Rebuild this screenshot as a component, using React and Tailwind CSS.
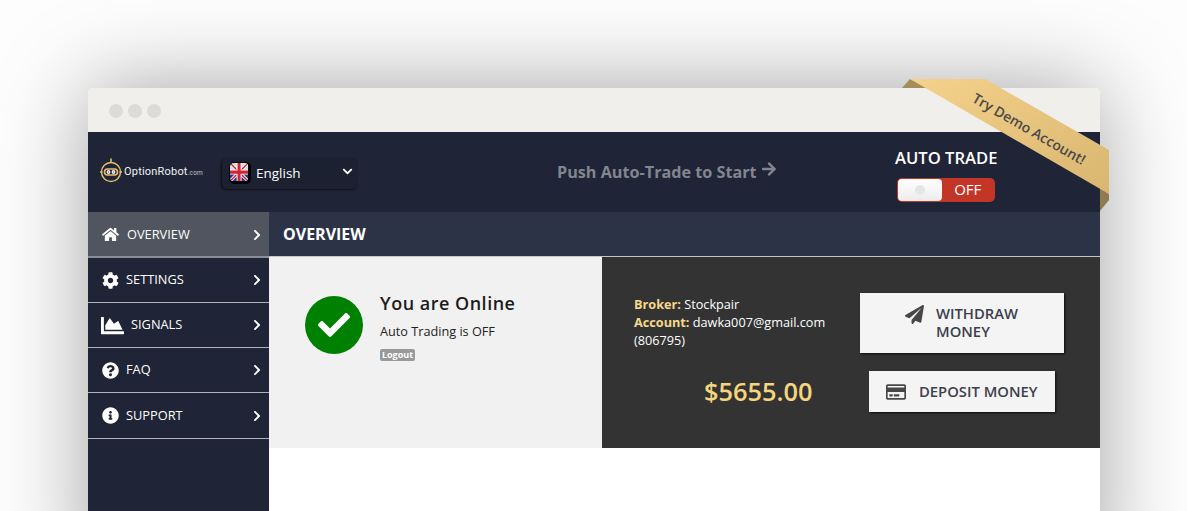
import { FaHome, FaCog, FaChartArea, FaQuestionCircle, FaInfoCircle, FaChevronRight, FaChevronDown, FaCheck, FaPaperPlane, FaArrowRight, FaRegCreditCard } from "react-icons/fa";

const menu = [
    { label: "OVERVIEW", icon: FaHome, size: 17, active: true, gap: "gap-[8px]", pl: "pl-[14px]" },
    { label: "SETTINGS", icon: FaCog, size: 17, gap: "gap-[7px]", pl: "pl-[14px]" },
    { label: "SIGNALS", icon: FaChartArea, size: 23, gap: "gap-[7px]", pl: "pl-[13px]" },
    { label: "FAQ", icon: FaQuestionCircle, size: 17, gap: "gap-[7px]", pl: "pl-[14px]" },
    { label: "SUPPORT", icon: FaInfoCircle, size: 17, gap: "gap-[7px]", last: true, pl: "pl-[14px]" },
];

function Logo() {
    return (
        <div className="flex items-center gap-[2px] w-[122px] shrink-0">
            <svg width="22" height="27" viewBox="0 0 22 27" fill="none" stroke="#e6bf6e" strokeWidth="1.4" className="shrink-0 mb-[3px]">
                <circle cx="11" cy="15" r="9.5" />
                <rect x="4.5" y="12" width="13" height="6" rx="3" strokeWidth="1.6" />
                <circle cx="8.5" cy="15" r="1.2" stroke="#f2f2f2" />
                <circle cx="13.5" cy="15" r="1.2" stroke="#f2f2f2" />
                <path d="M11 5.5V1.5M0 15H2.5M19.5 15H22" strokeWidth="1.6" />
            </svg>
            <span className="text-[11px] text-[#f2f2f2] font-['Roboto',sans-serif] tracking-[0.2px]">
                OptionRobot<span className="text-[6.5px] text-[#c4c4c4]">.com</span>
            </span>
        </div>
    );
}

function UkFlag() {
    return (
        <svg width="22" height="22" viewBox="0 0 22 22" className="rounded-[5px] bg-black p-[1px] shrink-0">
            <defs>
                <clipPath id="flag-clip"><rect width="20" height="20" rx="4" /></clipPath>
            </defs>
            <g clipPath="url(#flag-clip)">
                <rect width="20" height="10" fill="#d8dce8" />
                <rect y="10" width="20" height="10" fill="#1f3a9c" />
                <path d="M0 0L20 20M20 0L0 20" stroke="#fff" strokeWidth="3.4" />
                <path d="M0 0L20 20M20 0L0 20" stroke="#d02536" strokeWidth="1.6" />
                <path d="M10 0V20M0 10H20" stroke="#fff" strokeWidth="5.4" />
                <path d="M10 0V20M0 10H20" stroke="#d02536" strokeWidth="3.4" />
            </g>
        </svg>
    );
}

function Ribbon() {
    return (
        <div className="absolute left-[812px] top-[-10px] w-[215px] h-[135px] pointer-events-none">
            <svg width="215" height="135" viewBox="0 0 215 135" className="absolute inset-0">
                <defs>
                    <linearGradient id="ribbon-fill" x1="0" y1="0" x2="1" y2="1">
                        <stop offset="0" stopColor="#f4d28c" />
                        <stop offset="1" stopColor="#d8b670" />
                    </linearGradient>
                </defs>
                <path d="M2 10L10 1L28 10Z" fill="#a68c58" />
                <path d="M200 110L209 116V122L200 133Z" fill="#8f7b52" />
                <path d="M10 1H85L209 72V116Z" fill="url(#ribbon-fill)" />
            </svg>
            <div className="absolute left-[54px] top-[42px] w-[150px] text-center rotate-[30deg] text-[14px] leading-[18px] font-semibold text-[#4a4a48]">
                Try Demo Account!
            </div>
        </div>
    );
}

export default function App() {
    return (
        <div className="h-[511px] w-[1187px] overflow-hidden bg-[#fdfdfd] font-['Open_Sans',sans-serif]">
            <div className="pt-[88px] pl-[88px]">
                <div className="relative w-[1012px] h-[500px] rounded-t-[5px] bg-white shadow-[0_0_90px_rgba(0,0,0,0.36)]">
                    <div className="h-[44px] rounded-t-[5px] bg-[#f0efeb] flex items-center gap-[5px] pl-[21px] pt-[2px]">
                        <span className="w-[14px] h-[14px] rounded-full bg-[#dcdbd7]" />
                        <span className="w-[14px] h-[14px] rounded-full bg-[#dcdbd7]" />
                        <span className="w-[14px] h-[14px] rounded-full bg-[#dcdbd7]" />
                    </div>

                    <div className="h-[80px] bg-[#1f2436] flex items-center pl-[12px]">
                        <Logo />
                        <div className="w-[136px] h-[31px] mt-[2px] shrink-0 rounded-[5px] bg-[#1c2131] shadow-[-1px_1px_2px_rgba(0,0,0,0.6)] flex items-center pl-[7px] text-white">
                            <UkFlag />
                            <span className="ml-[5px] text-[13.5px]">English</span>
                            <FaChevronDown size={11} className="ml-[41px] mb-[4px]" />
                        </div>
                        <div className="ml-[199px] w-[220px] shrink-0 flex items-start text-[16.2px] font-bold text-[#82868f]">
                            <span>Push Auto-Trade to Start</span>
                            <FaArrowRight size={16} className="ml-[4px] mt-[1px]" />
                        </div>
                        <div className="ml-[118px] mt-[4px] flex flex-col items-center">
                            <span className="text-[16.6px] leading-[22px] font-semibold text-white">AUTO TRADE</span>
                            <div className="mt-[9px] w-[98px] h-[24px] rounded-[5px] bg-[#c23527] flex items-center p-[1px]">
                                <div className="w-[44px] h-[22px] rounded-[4px] bg-gradient-to-b from-white to-[#ececec] flex items-center justify-center">
                                    <span className="w-[10px] h-[10px] rounded-full bg-[#e6e6e6]" />
                                </div>
                                <span className="ml-[12px] text-[15px] font-medium text-white">OFF</span>
                            </div>
                        </div>
                    </div>

                    <div className="flex">
                        <aside className="w-[181px] h-[299px] bg-[#1f2436] shrink-0">
                            {menu.map((item) => {
                                const Icon = item.icon;
                                return (
                                    <div
                                        key={item.label}
                                        className={`flex items-center ${item.gap} ${item.pl} pr-[6px] text-white text-[12.8px] ${item.active ? "h-[46px] pt-[1px] bg-[#50555f] border-b-2 border-[#8b8e96]" : "border-b border-[#b0b2b8]"} ${item.last ? "h-[46px]" : "h-[45px]"}`}
                                    >
                                        <Icon size={item.size} className="shrink-0" />
                                        <span className="flex-1">{item.label}</span>
                                        <FaChevronRight size={12} className="shrink-0" />
                                    </div>
                                );
                            })}
                        </aside>

                        <main className="flex-1 min-w-0">
                            <div className="h-[45px] bg-[#2c3347] border-b border-[#c4c6cb] flex items-center pl-[14px] text-[16px] font-bold text-white">
                                OVERVIEW
                            </div>
                            <div className="flex h-[191px]">
                                <div className="w-[333px] bg-[#f1f1f1] flex items-start pl-[36px] pt-[39px]">
                                    <div className="w-[58px] h-[58px] rounded-full bg-[#008000] flex items-center justify-center shrink-0">
                                        <FaCheck size={32} className="text-white" />
                                    </div>
                                    <div className="ml-[17px] -mt-[6px]">
                                        <div className="text-[18px] leading-[26px] font-semibold tracking-[0.5px] text-[#1c1c1c]">You are Online</div>
                                        <div className="mt-[6px] text-[12.7px] leading-[18px] text-[#222]">Auto Trading is OFF</div>
                                        <div className="mt-[9px] w-[35px] h-[12px] rounded-[2px] bg-[#999] text-center text-[9px] leading-[12px] font-bold text-white">Logout</div>
                                    </div>
                                </div>
                                <div className="flex-1 bg-[#333333] flex pl-[32px] pt-[36px]">
                                    <div className="w-[226px] shrink-0">
                                        <div className="pt-[2px] text-[12.7px] leading-[18px] text-white">
                                            <div><b className="font-bold text-[#f6d98a]">Broker:</b> Stockpair</div>
                                            <div><b className="font-bold text-[#f6d98a]">Account:</b> dawka007@gmail.com</div>
                                            <div>(806795)</div>
                                        </div>
                                        <div className="mt-[25px] ml-[70px] text-[25.4px] leading-[34px] font-semibold text-[#f4d67e]">$5655.00</div>
                                    </div>
                                    <div className="flex flex-col items-center w-[204px]">
                                        <div className="w-[204px] h-[60px] bg-[#f4f4f4] shadow-[1px_1px_2px_rgba(0,0,0,0.8)] flex items-center pl-[45px] pb-[2px] text-[14.8px] leading-[18px] font-semibold text-[#3c404c]">
                                            <FaPaperPlane size={19} className="shrink-0 self-start mt-[12px] text-[#474747]" />
                                            <span className="ml-[12px]">WITHDRAW<br />MONEY</span>
                                        </div>
                                        <div className="mt-[18px] w-[186px] h-[41px] bg-[#f4f4f4] shadow-[1px_1px_2px_rgba(0,0,0,0.8)] flex items-center pl-[17px] text-[14.8px] font-semibold text-[#3c404c]">
                                            <FaRegCreditCard size={20} className="shrink-0 text-[#474747]" />
                                            <span className="ml-[13px] whitespace-nowrap">DEPOSIT MONEY</span>
                                        </div>
                                    </div>
                                </div>
                            </div>
                        </main>
                    </div>

                    <Ribbon />
                </div>
            </div>
        </div>
    );
}
